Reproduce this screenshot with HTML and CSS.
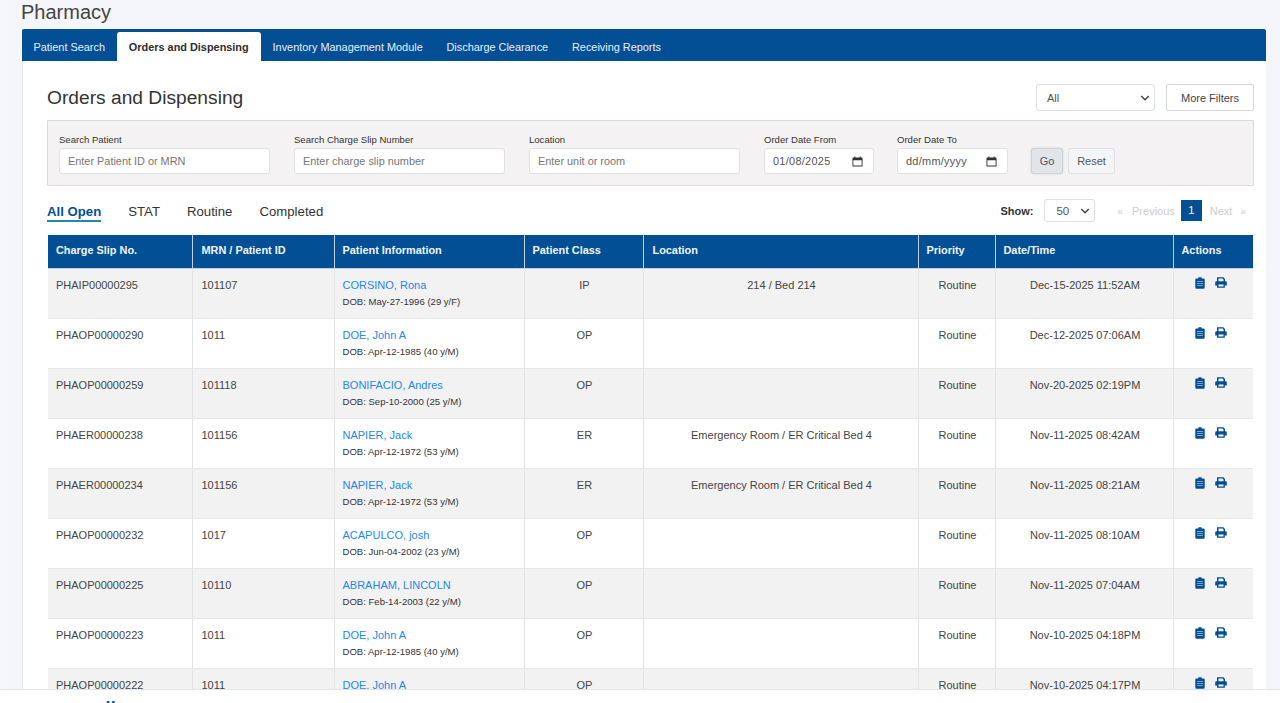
FILE: index.html
```html
<!DOCTYPE html>
<html lang="en">
<head>
<meta charset="utf-8">
<title>Pharmacy</title>
<link rel="stylesheet" href="styles.css">
</head>
<body>
<svg class="sprites" width="0" height="0" aria-hidden="true">
  <symbol id="i-clip" viewBox="0 0 10 12"><path fill-rule="evenodd" d="M3.400 0.300h3.200v1.100h1.900q1.200 0 1.200 1.200v7.900q0 1.200-1.200 1.200H1.500q-1.200 0-1.200-1.200V2.600q0-1.200 1.200-1.200h1.900zM2 4.200v0.600h6V4.200zM2 6.200v0.600h6V6.200zM2 8.200v0.600h6V8.200z"/></symbol>
  <symbol id="i-print" viewBox="0 0 12 11"><path fill-rule="evenodd" d="M2 0.300h6.400l1.600 1.600v2.300h0.500q1.300 0 1.300 1.300v3.100h-2V10.700H2V8.600H0.200V5.500q0-1.300 1.300-1.300H2zM3.500 1.600v2.600h5V2.400L7.700 1.600zM3.500 7.500v1.900h5V7.500z"/></symbol>
  <symbol id="i-cal" viewBox="0 0 12 12"><path fill-rule="evenodd" d="M2.500 0.500h1.200v1h4.600v-1h1.200v1h1q1 0 1 1v8q0 1-1 1h-9q-1 0-1-1v-8q0-1 1-1h1zM1.500 4.500v5.800h9V4.500z"/></symbol>
  <symbol id="i-chev" viewBox="0 0 12 8"><path d="M1.500 1.500 6 6l4.500-4.500" fill="none" stroke="currentColor" stroke-width="1.800"/></symbol>
</svg>
<div class="page">
  <div class="content">
    <h1 class="page-title">Pharmacy</h1>
    <section class="card">
      <nav class="tabs">
        <a class="tab">Patient Search</a>
        <a class="tab tab-active">Orders and Dispensing</a>
        <a class="tab">Inventory Management Module</a>
        <a class="tab">Discharge Clearance</a>
        <a class="tab">Receiving Reports</a>
      </nav>
      <div class="panel">
        <div class="head-row">
          <h2 class="panel-title">Orders and Dispensing</h2>
          <div class="head-tools">
            <div class="select select-all"><span>All</span><svg class="chev"><use href="#i-chev"/></svg></div>
            <button class="btn-outline">More Filters</button>
          </div>
        </div>
        <form class="filters">
          <div class="field f-wide"><label>Search Patient</label><input class="input" placeholder="Enter Patient ID or MRN"></div>
          <div class="field f-wide"><label>Search Charge Slip Number</label><input class="input" placeholder="Enter charge slip number"></div>
          <div class="field f-wide"><label>Location</label><input class="input" placeholder="Enter unit or room"></div>
          <div class="field f-date"><label>Order Date From</label><div class="input date"><span>01/08/2025</span><svg class="cal"><use href="#i-cal"/></svg></div></div>
          <div class="field f-date2"><label>Order Date To</label><div class="input date"><span>dd/mm/yyyy</span><svg class="cal"><use href="#i-cal"/></svg></div></div>
          <div class="filter-btns">
            <button type="button" class="btn-go">Go</button>
            <button type="button" class="btn-reset">Reset</button>
          </div>
        </form>
        <div class="list-bar">
          <div class="pills">
            <a class="pill pill-active">All Open</a>
            <a class="pill">STAT</a>
            <a class="pill">Routine</a>
            <a class="pill">Completed</a>
          </div>
          <div class="list-tools">
            <span class="show-label">Show:</span>
            <div class="select select-show"><span>50</span><svg class="chev"><use href="#i-chev"/></svg></div>
            <div class="pager">
              <span class="pg-off pg-prev"><i>«</i>Previous</span>
              <span class="pg-cur">1</span>
              <span class="pg-off pg-next">Next<i>»</i></span>
            </div>
          </div>
        </div>
        <table class="orders">
          <colgroup>
            <col class="c1"><col class="c2"><col class="c3"><col class="c4"><col class="c5"><col class="c6"><col class="c7"><col class="c8">
          </colgroup>
          <thead>
            <tr><th>Charge Slip No.</th><th>MRN / Patient ID</th><th>Patient Information</th><th>Patient Class</th><th>Location</th><th>Priority</th><th>Date/Time</th><th>Actions</th></tr>
          </thead>
          <tbody>
            <tr><td>PHAIP00000295</td><td>101107</td><td><a class="pt">CORSINO, Rona</a><div class="dob">DOB: May-27-1996 (29 y/F)</div></td><td class="ctr">IP</td><td class="ctr">214 / Bed 214</td><td class="ctr">Routine</td><td class="ctr">Dec-15-2025 11:52AM</td><td class="acts"><svg class="ic-clip"><use href="#i-clip"/></svg><svg class="ic-print"><use href="#i-print"/></svg></td></tr>
            <tr><td>PHAOP00000290</td><td>1011</td><td><a class="pt">DOE, John A</a><div class="dob">DOB: Apr-12-1985 (40 y/M)</div></td><td class="ctr">OP</td><td class="ctr"></td><td class="ctr">Routine</td><td class="ctr">Dec-12-2025 07:06AM</td><td class="acts"><svg class="ic-clip"><use href="#i-clip"/></svg><svg class="ic-print"><use href="#i-print"/></svg></td></tr>
            <tr><td>PHAOP00000259</td><td>101118</td><td><a class="pt">BONIFACIO, Andres</a><div class="dob">DOB: Sep-10-2000 (25 y/M)</div></td><td class="ctr">OP</td><td class="ctr"></td><td class="ctr">Routine</td><td class="ctr">Nov-20-2025 02:19PM</td><td class="acts"><svg class="ic-clip"><use href="#i-clip"/></svg><svg class="ic-print"><use href="#i-print"/></svg></td></tr>
            <tr><td>PHAER00000238</td><td>101156</td><td><a class="pt">NAPIER, Jack</a><div class="dob">DOB: Apr-12-1972 (53 y/M)</div></td><td class="ctr">ER</td><td class="ctr">Emergency Room / ER Critical Bed 4</td><td class="ctr">Routine</td><td class="ctr">Nov-11-2025 08:42AM</td><td class="acts"><svg class="ic-clip"><use href="#i-clip"/></svg><svg class="ic-print"><use href="#i-print"/></svg></td></tr>
            <tr><td>PHAER00000234</td><td>101156</td><td><a class="pt">NAPIER, Jack</a><div class="dob">DOB: Apr-12-1972 (53 y/M)</div></td><td class="ctr">ER</td><td class="ctr">Emergency Room / ER Critical Bed 4</td><td class="ctr">Routine</td><td class="ctr">Nov-11-2025 08:21AM</td><td class="acts"><svg class="ic-clip"><use href="#i-clip"/></svg><svg class="ic-print"><use href="#i-print"/></svg></td></tr>
            <tr><td>PHAOP00000232</td><td>1017</td><td><a class="pt">ACAPULCO, josh</a><div class="dob">DOB: Jun-04-2002 (23 y/M)</div></td><td class="ctr">OP</td><td class="ctr"></td><td class="ctr">Routine</td><td class="ctr">Nov-11-2025 08:10AM</td><td class="acts"><svg class="ic-clip"><use href="#i-clip"/></svg><svg class="ic-print"><use href="#i-print"/></svg></td></tr>
            <tr><td>PHAOP00000225</td><td>10110</td><td><a class="pt">ABRAHAM, LINCOLN</a><div class="dob">DOB: Feb-14-2003 (22 y/M)</div></td><td class="ctr">OP</td><td class="ctr"></td><td class="ctr">Routine</td><td class="ctr">Nov-11-2025 07:04AM</td><td class="acts"><svg class="ic-clip"><use href="#i-clip"/></svg><svg class="ic-print"><use href="#i-print"/></svg></td></tr>
            <tr><td>PHAOP00000223</td><td>1011</td><td><a class="pt">DOE, John A</a><div class="dob">DOB: Apr-12-1985 (40 y/M)</div></td><td class="ctr">OP</td><td class="ctr"></td><td class="ctr">Routine</td><td class="ctr">Nov-10-2025 04:18PM</td><td class="acts"><svg class="ic-clip"><use href="#i-clip"/></svg><svg class="ic-print"><use href="#i-print"/></svg></td></tr>
            <tr><td>PHAOP00000222</td><td>1011</td><td><a class="pt">DOE, John A</a></td><td class="ctr">OP</td><td class="ctr"></td><td class="ctr">Routine</td><td class="ctr">Nov-10-2025 04:17PM</td><td class="acts"><svg class="ic-clip"><use href="#i-clip"/></svg><svg class="ic-print"><use href="#i-print"/></svg></td></tr>
          </tbody>
        </table>
      </div>
    </section>
  </div>
  <footer class="footer"><span class="footer-mark">M</span></footer>
</div>
</body>
</html>
```
FILE: styles.css
```css
* { box-sizing: border-box; }
html, body { margin: 0; height: 100%; overflow: hidden; }
body {
  font-family: "Liberation Sans", Arial, sans-serif;
  font-size: 11px;
  color: #444;
  background: #f6f6fb;
}
.sprites { position: absolute; }
.page { height: 703px; display: flex; flex-direction: column; overflow: hidden; }
.content {
  flex: 1;
  min-height: 0;
  overflow: hidden;
  margin-left: 8px;
  padding: 0 14px;
  background: #f4f6fb;
}
.page-title {
  margin: 0 0 0 -1px;
  height: 29px;
  padding-top: 1px;
  font-size: 20px;
  line-height: 23px;
  font-weight: 400;
  color: #444;
}
.card { background: #fff; border-left: 1px solid #e6e8ec; }
.tabs {
  display: flex;
  align-items: flex-end;
  height: 32px;
  margin-left: -1px;
  background: #034f96;
  border-radius: 2px 2px 0 0;
}
.tab {
  height: 29px;
  padding: 0 11.900px;
  line-height: 30px;
  color: #e9f0f8;
  font-size: 10.900px;
  white-space: nowrap;
}
.tab:first-child { padding-left: 11.500px; }
.tab-active {
  padding: 0 12px;
  background: #fff;
  color: #2e2e2e;
  font-weight: 700;
  border-radius: 3px 3px 0 0;
}
.panel { padding: 0 12px 0 24px; }
.head-row {
  display: flex;
  justify-content: space-between;
  align-items: center;
  height: 59px;
  padding-top: 14px;
}
.panel-title { margin: 0; font-size: 19.200px; line-height: 24px; font-weight: 400; color: #333; }
.head-tools { display: flex; gap: 11px; }
.select {
  display: flex;
  align-items: center;
  justify-content: space-between;
  background: #fff;
  border: 1px solid #dcdfe3;
  border-radius: 3px;
  color: #555;
  font-size: 11px;
}
.select-all { width: 119px; height: 27px; padding: 0 4px 0 10px; }
.chev { width: 10px; height: 8px; color: #444; }
.btn-outline {
  width: 88px;
  height: 27px;
  padding: 0;
  background: #fff;
  border: 1px solid #d4d7db;
  border-radius: 2px;
  font: 11px "Liberation Sans", Arial, sans-serif;
  color: #444;
}
.filters {
  display: flex;
  height: 66px;
  padding: 13px 11px 0;
  background: #f4f2f3;
  border: 1px solid #d9d9d9;
  border-radius: 1px;
}
.field { display: flex; flex-direction: column; }
.field label { font-size: 9.550px; line-height: 12px; margin-bottom: 2px; color: #333; }
.f-wide { width: 211px; margin-right: 24px; }
.f-date { width: 110px; margin-right: 23px; }
.f-date2 { width: 111px; margin-right: 23px; }
.input {
  width: 100%;
  height: 26px;
  padding: 0 8px;
  background: #fff;
  border: 1px solid #dfe1e5;
  border-radius: 3px;
  font: 10.900px "Liberation Sans", Arial, sans-serif;
  color: #555;
  outline: none;
}
.input::placeholder { color: #777; opacity: 1; }
.date { display: flex; align-items: center; justify-content: space-between; padding-right: 10px; letter-spacing: 0.3px; }
.cal { width: 11px; height: 11px; fill: #333; }
.filter-btns { display: flex; gap: 5px; padding-top: 14px; }
.btn-go, .btn-reset {
  height: 26px;
  padding: 0;
  border-radius: 3px;
  font: 11px "Liberation Sans", Arial, sans-serif;
  color: #555;
}
.btn-go { width: 32px; background: #e1e4e8; border: 1px solid #cfd3d8; box-shadow: 0 0 2px #c5c8cc; }
.btn-reset { width: 47px; background: #f4f5f6; border: 1px solid #dfe1e4; }
.list-bar {
  display: flex;
  justify-content: space-between;
  align-items: center;
  height: 49px;
}
.pills { display: flex; gap: 27px; font-size: 13.200px; color: #333; margin-top: 4px; }
.pill { line-height: 15px; padding-bottom: 1px; }
.pill-active { color: #034f96; font-weight: 700; border-bottom: 2px solid #1f8aa5; }
.list-tools { display: flex; align-items: center; }
.show-label { font-weight: 700; color: #333; margin-right: 11px; }
.select-show { width: 51px; height: 23px; padding: 0 4px 0 11px; margin-right: 22px; font-size: 11.500px; }
.pager { display: flex; align-items: center; color: #ccc; font-size: 11px; padding-right: 8px; }
.pg-off i { font-style: normal; font-size: 10px; }
.pg-prev i { margin-right: 9px; }
.pg-next i { margin-left: 8px; }
.pg-prev { margin-right: 6px; }
.pg-next { margin-left: 8px; }
.pg-cur {
  width: 21px;
  height: 21px;
  line-height: 21px;
  text-align: center;
  background: #034f96;
  color: #fff;
}
.orders {
  width: calc(100% - 2px);
  margin: 0 1px;
  table-layout: fixed;
  border-collapse: collapse;
  background: #fff;
}
.c1 { width: 144px; } .c2 { width: 142px; } .c3 { width: 190px; } .c4 { width: 119px; }
.c5 { width: 275px; } .c6 { width: 77px; } .c7 { width: 178px; } .c8 { width: 80px; }
.orders th {
  height: 33px;
  padding: 0 8px 2px;
  background: #034f96;
  color: #f1f5fa;
  font-size: 10.900px;
  font-weight: 700;
  text-align: left;
  border-left: 1px solid #c3d0e0;
  border-bottom: 1px solid #c3d0e0;
}
.orders th:nth-child(2), .orders th:nth-child(5) { padding-left: 9px; }
.orders th:first-child { border-left: 0; }
.orders td {
  height: 50px;
  padding: 10px 8px 0;
  vertical-align: top;
  font-size: 11px;
  line-height: 13px;
  color: #444;
  border-left: 1px solid #e2e3e5;
  border-bottom: 1px solid #e6e7e9;
}
.orders td:nth-child(2) { padding-left: 9px; }
.orders td:first-child { border-left: 0; }
.orders td.ctr { padding-left: 10px; }
.orders tbody tr:nth-child(odd) td { background: #f2f2f2; }
.ctr { text-align: center; }
.pt { color: #2387ee; }
.dob { margin-top: 4px; font-size: 9.550px; line-height: 12px; color: #333; }
.acts { white-space: nowrap; }
.orders td.acts { padding: 8px 0 0 21px; }
.acts svg { fill: #034f96; display: inline-block; vertical-align: top; }
.ic-clip { width: 10px; height: 12px; margin-right: 10px; }
.ic-print { width: 12px; height: 11px; }
.footer {
  flex: none;
  height: 14px;
  background: #fff;
  border-top: 1px solid #e4e5e8;
  padding-left: 106px;
  overflow: hidden;
}
.footer-mark {
  display: block;
  margin-top: 9px;
  font-size: 11px;
  font-weight: 700;
  line-height: 13px;
  color: #034f96;
}
```
